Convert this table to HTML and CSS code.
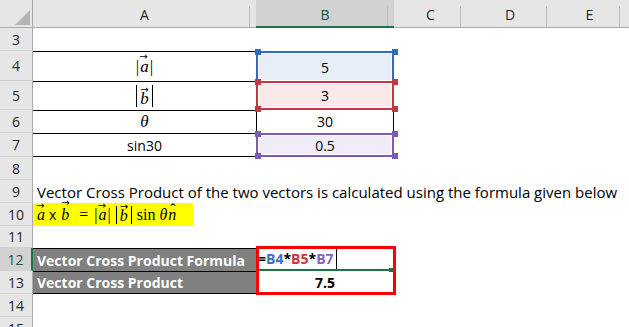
FILE: index.html
```html
<!DOCTYPE html>
<html>
<head>
<meta charset="utf-8">
<link rel="stylesheet" href="styles.css">
</head>
<body>
<div class="sheet">
  <div class="row">
    <div class="corner"><span class="tri"></span></div>
    <div class="ch">A</div>
    <div class="ch sel">B</div>
    <div class="ch">C</div>
    <div class="ch">D</div>
    <div class="ch">E</div>
    <div class="ch tail"></div>
  </div>
  <div class="row">
    <div class="rh">3</div>
    <div class="c"></div><div class="c"></div><div class="c"></div><div class="c"></div><div class="c"></div><div class="c"></div>
  </div>
  <div class="row">
    <div class="rh">4</div>
    <div class="c ctr bt math"><span>|</span><span class="vec lo">a</span><span>|</span></div>
    <div class="c ctr rng blue">5</div>
    <div class="c"></div><div class="c"></div><div class="c"></div><div class="c"></div>
  </div>
  <div class="row">
    <div class="rh">5</div>
    <div class="c ctr bt math"><span class="tall"><span class="vec">b</span></span></div>
    <div class="c ctr rng red">3</div>
    <div class="c"></div><div class="c"></div><div class="c"></div><div class="c"></div>
  </div>
  <div class="row">
    <div class="rh">6</div>
    <div class="c ctr bt math"><i>θ</i></div>
    <div class="c ctr lr">30</div>
    <div class="c"></div><div class="c"></div><div class="c"></div><div class="c"></div>
  </div>
  <div class="row">
    <div class="rh">7</div>
    <div class="c ctr bt bb">sin30</div>
    <div class="c ctr rng purple">0.5</div>
    <div class="c"></div><div class="c"></div><div class="c"></div><div class="c"></div>
  </div>
  <div class="row">
    <div class="rh">8</div>
    <div class="c"></div><div class="c"></div><div class="c"></div><div class="c"></div><div class="c"></div><div class="c"></div>
  </div>
  <div class="row">
    <div class="rh">9</div>
    <div class="c span">Vector Cross Product of the two vectors is calculated using the formula given below</div>
  </div>
  <div class="row">
    <div class="rh">10</div>
    <div class="c nopad"><span class="eq math"><span class="vec lo">a</span><span class="times">x</span><span class="vec">b</span><span class="eqs">=</span><span>|</span><span class="vec lo">a</span><span>|</span><span class="tall small"><span class="vec">b</span></span><span class="fn">sin</span><i>θ</i><span class="hat">n</span></span></div>
    <div class="c"></div><div class="c"></div><div class="c"></div><div class="c"></div><div class="c"></div>
  </div>
  <div class="row">
    <div class="rh">11</div>
    <div class="c"></div><div class="c"></div><div class="c"></div><div class="c"></div><div class="c"></div><div class="c"></div>
  </div>
  <div class="row">
    <div class="rh selr">12</div>
    <div class="c gray bt">Vector Cross Product Formula</div>
    <div class="c edit"><span class="k">=</span><span class="r1">B4</span><span class="k">*</span><span class="r2">B5</span><span class="k">*</span><span class="r3">B7</span><span class="caret"></span></div>
    <div class="c"></div><div class="c"></div><div class="c"></div><div class="c"></div>
  </div>
  <div class="row">
    <div class="rh">13</div>
    <div class="c gray bt bb">Vector Cross Product</div>
    <div class="c ctr bold">7.5</div>
    <div class="c"></div><div class="c"></div><div class="c"></div><div class="c"></div>
  </div>
  <div class="row">
    <div class="rh">14</div>
    <div class="c"></div><div class="c"></div><div class="c"></div><div class="c"></div><div class="c"></div><div class="c"></div>
  </div>
  <div class="row">
    <div class="rh">15</div>
    <div class="c"></div><div class="c"></div><div class="c"></div><div class="c"></div><div class="c"></div><div class="c"></div>
  </div>
  <div class="redbox"></div>
</div>
</body>
</html>
```

FILE: styles.css
```css
* { box-sizing: border-box; margin: 0; padding: 0; }
html, body { width: 629px; height: 327px; overflow: hidden; background: #fff; }
body { font-family: "Open Sans", sans-serif; font-size: 14px; color: #000; }

.sheet {
  display: grid;
  grid-template-columns: 33px 223px 138px 73px 86px 73px 3px;
  grid-template-rows: 28px 23px 30px 29px 23px 24px 23px 23px 23px 22px 23px 23px 23px 23px;
  position: relative;
}
.row { display: contents; }

.corner {
  background: #e6e6e6;
  border-right: 1px solid #ababab;
  border-bottom: 1px solid #ababab;
  display: flex;
  align-items: flex-end;
  justify-content: flex-end;
  padding: 0 2px 2px 0;
}
.tri {
  width: 0; height: 0;
  border-left: 15px solid transparent;
  border-bottom: 15px solid #b4b4b4;
}
.ch {
  background: linear-gradient(#bdbdbd, #bdbdbd) right 6px top 6px / 1px 100% no-repeat, #e6e6e6;
  border-bottom: 1px solid #ababab;
  display: flex;
  align-items: center;
  justify-content: center;
  color: #262626;
  font-size: 14px;
  padding-top: 2px;
}
.ch.sel {
  background: linear-gradient(#bdbdbd, #bdbdbd) right 6px top 6px / 1px 100% no-repeat, #d2d2d2;
  border-bottom: 2px solid #217346;
  color: #1e4e33;
}
.ch.tail { background: #e6e6e6; }

.rh {
  background: #e6e6e6;
  border-right: 1px solid #ababab;
  border-bottom: 1px solid #d0d0d0;
  display: flex;
  align-items: center;
  justify-content: center;
  color: #262626;
  font-size: 14px;
}
.rh.selr {
  background: #d2d2d2;
  border-right: 2px solid #217346;
  color: #1e5a39;
}

.c {
  display: flex;
  align-items: center;
  padding: 0 4px;
  white-space: nowrap;
  background: #fff;
}
.ctr { justify-content: center; }
.nopad { padding: 0; }
.span { grid-column: span 6; font-size: 15px; }
.bt { border-top: 1px solid #000; }
.bb { border-bottom: 1px solid #000; }
.lr { border-left: 1px solid #000; border-right: 1px solid #000; }
.bold { font-weight: 700; }

.rng {
  position: relative;
  border: 2px solid;
  box-shadow: inset 0 0 0 1px #fff;
}
.rng::before {
  content: "";
  position: absolute;
  width: 6px; height: 6px;
  left: -3px; top: -4px;
  background: currentColor;
}
.blue { border-color: #2f6bc4; border-bottom: none; background: #e8eef8; color: #000; }
.blue::before { background: #2f6bc4; box-shadow: 137px 0 0 #2f6bc4; }
.red { border-color: #c03943; background: #f9e9ea; }
.red::before { background: #c03943; box-shadow: 137px 0 0 #c03943, 0 27px 0 #c03943, 137px 27px 0 #c03943; }
.purple { border-color: #7f5abd; background: #f0edf8; }
.purple::before { background: #7f5abd; box-shadow: 137px 0 0 #7f5abd, 0 22px 0 #7f5abd, 137px 22px 0 #7f5abd; }

.math { font-family: "Liberation Serif", "DejaVu Serif", serif; font-size: 17px; }
.math i { font-style: italic; }
.vec {
  position: relative;
  font-style: italic;
  display: inline-block;
  padding: 0 1px;
}
.vec::before {
  content: "\2192";
  position: absolute;
  left: 1px;
  top: -9px;
  font-family: "DejaVu Sans", sans-serif;
  font-style: normal;
  font-size: 10px;
}
.vec.lo::before { top: -6px; left: 0; }
.tall {
  display: inline-flex;
  align-items: flex-end;
  border-left: 1px solid #000;
  border-right: 1px solid #000;
  padding: 4px 2px 0 2px;
  line-height: 17px;
  height: 22px;
}
.tall.small { height: 18px; margin: 0 4px 0 5px; padding-top: 0; }

.eq {
  display: inline-flex;
  align-items: center;
  background: #ffff00;
  height: 23px;
  width: 160px;
  padding-left: 3px;
  font-size: 16px;
}
.times { font-family: "Open Sans", sans-serif; font-size: 14px; margin: 0 4px 0 3px; }
.eqs { margin: 0 6px 0 9px; }
.fn { margin: 0 4px 0 1px; }
.hat { position: relative; font-style: italic; padding-left: 1px; }
.hat::before {
  content: "\02C6";
  position: absolute;
  left: 3px;
  top: -5px;
  font-style: normal;
}

.gray {
  background: #808080;
  color: #fff;
  font-weight: 700;
}
.edit {
  font-weight: 700;
  border-bottom: 2px solid #217346;
  padding-left: 2px;
  position: relative;
}
.edit::after {
  content: "";
  position: absolute;
  right: 1px;
  bottom: -3px;
  width: 4px; height: 4px;
  background: #217346;
}
.k { color: #000; }
.r1 { color: #3a6fca; }
.r2 { color: #c8353f; }
.r3 { color: #8a5fc4; }
.caret { display: inline-block; width: 1px; height: 20px; background: #000; margin-left: 2px; }

.redbox {
  position: absolute;
  grid-area: 11 / 3 / 13 / 4;
  top: -2px; left: 0; right: -2px; bottom: -1px;
  border: 3px solid #ff0000;
  pointer-events: none;
}
```
